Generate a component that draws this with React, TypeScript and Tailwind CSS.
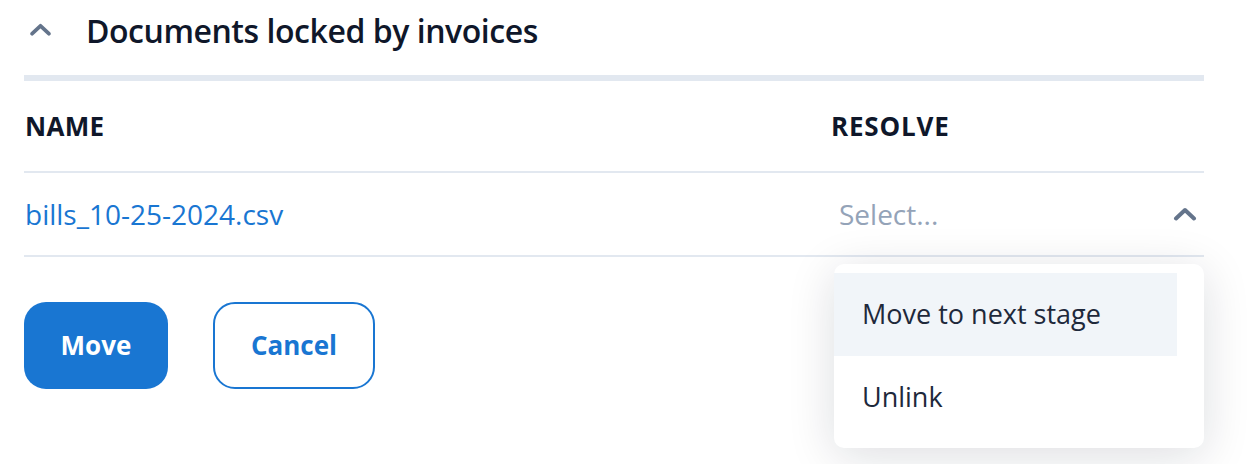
import React from "react";

function ChevronUp({ className = "" }: { className?: string }) {
  return (
    <svg viewBox="0 0 24 14" fill="none" className={className} aria-hidden>
      <path d="M3 11.5 12 3l9 8.5" stroke="currentColor" strokeWidth="4" strokeLinecap="round" strokeLinejoin="round" />
    </svg>
  );
}

export default function App() {
  return (
    <div
      className="relative h-[464px] w-[1250px] overflow-hidden bg-white text-[#0f172a]"
      style={{ fontFamily: '"Open Sans", "Noto Sans", sans-serif' }}
    >
      <div className="w-[1204px] pl-[24px]">
        {/* Section header */}
        <div className="flex h-[75px] items-start pt-[9px]">
          <button type="button" className="mt-[14px] ml-[5px] flex w-[24px] text-[#64748b]" aria-label="Collapse">
            <ChevronUp className="h-[13px] w-[23px]" />
          </button>
          <h2 className="ml-[33px] text-[32px] leading-[44px] font-semibold tracking-[-0.45px] text-[#0f172a]">
            Documents locked by invoices
          </h2>
        </div>
        <div className="h-[6px] bg-[#e2e8f0]" />

        {/* Table */}
        <div className="grid grid-cols-[807px_1fr]">
          <div className="flex h-[90px] items-center pl-[1px] text-[26px] font-bold tracking-[0.3px]">NAME</div>
          <div className="flex h-[90px] items-center text-[26px] font-bold tracking-[0.8px]">RESOLVE</div>
        </div>
        <div className="h-[2px] bg-[#e2e8f0]" />
        <div className="grid h-[82px] grid-cols-[807px_1fr]">
          <div className="flex items-center pl-[1px] text-[28px] text-[#1976d2]">bills_10-25-2024.csv</div>
          <div className="flex items-center justify-between pl-[8px] pr-[7px]">
            <span className="text-[28px] text-[#94a3b8]">Select...</span>
            <ChevronUp className="h-[14px] w-[24px] text-[#64748b]" />
          </div>
        </div>
        <div className="h-[2px] bg-[#e2e8f0]" />

        {/* Actions */}
        <div className="mt-[45px] flex gap-[45px]">
          <button
            type="button"
            className="h-[87px] w-[144px] rounded-[22px] bg-[#1976d2] text-[26px] font-bold text-white"
          >
            Move
          </button>
          <button
            type="button"
            className="h-[87px] w-[162px] rounded-[22px] border-2 border-[#1976d2] bg-white text-[26px] font-bold text-[#1976d2]"
          >
            Cancel
          </button>
        </div>
      </div>

      {/* Dropdown menu */}
      <div className="absolute left-[834px] top-[264px] w-[370px] rounded-[10px] bg-white py-[9px] shadow-[0_8px_48px_rgba(15,23,42,0.14)]">
        <div className="mr-[27px] flex h-[83px] items-center bg-[#f1f5f9] pl-[28px] text-[27px] text-[#1e293b]">
          Move to next stage
        </div>
        <div className="mr-[27px] flex h-[83px] items-center pl-[28px] text-[27px] text-[#1e293b]">Unlink</div>
      </div>
    </div>
  );
}
